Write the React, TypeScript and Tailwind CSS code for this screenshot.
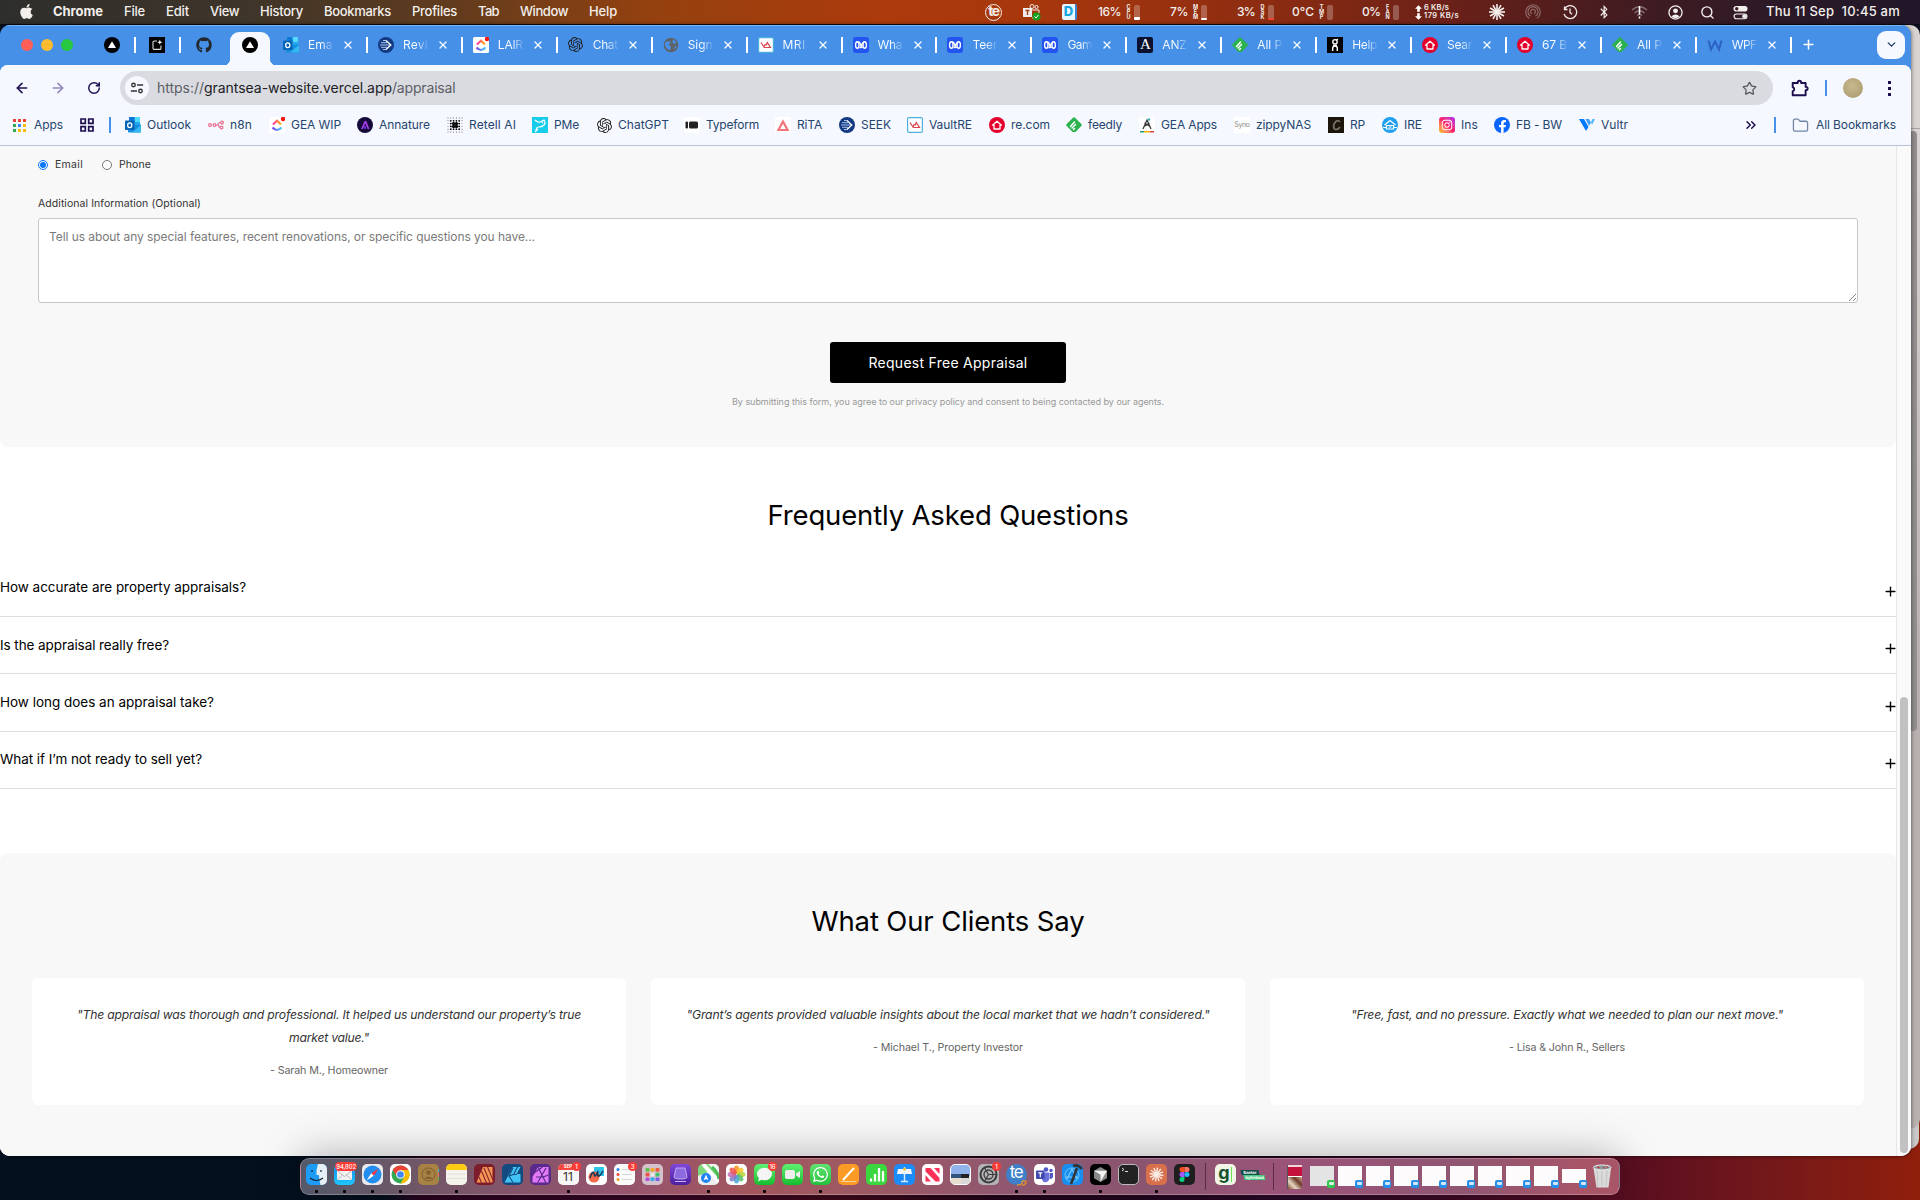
import React, { useLayoutEffect, useRef } from "react";
import { FaApple, FaGithub, FaBluetoothB, FaWhatsapp, FaInstagram, FaFacebookF } from "react-icons/fa";
import { SiOpenai } from "react-icons/si";
import { ArrowLeft, ArrowRight, ChevronDown, ChevronsRight, Folder, Plus, RotateCw, Search, Star, X } from "lucide-react";

/** Single line of text whose tracking is tuned so that it fills a given width. */
function Fit({ w, className = "", children }: { w: number; className?: string; children: string }) {
  const ref = useRef<HTMLSpanElement>(null);
  useLayoutEffect(() => {
    const el = ref.current;
    if (!el) return;
    el.style.letterSpacing = "0px";
    const natural = el.getBoundingClientRect().width;
    el.style.letterSpacing = `${(w - natural) / children.length}px`;
  }, [w, children]);
  return (
    <span ref={ref} className={`inline-block shrink-0 whitespace-pre ${className}`}>
      {children}
    </span>
  );
}

type SvgProps = { children: React.ReactNode; s?: number; vb?: string; className?: string };
const Svg = ({ children, s = 16, vb = "0 0 16 16", className = "" }: SvgProps) => (
  <svg width={s} height={s} viewBox={vb} fill="none" className={`block shrink-0 ${className}`}>
    {children}
  </svg>
);

/* ---------- site icons ---------- */
const VercelIcon = () => (
  <Svg><circle cx="8" cy="8" r="8" fill="#000" /><path d="M8 4.3 12 11H4Z" fill="#fff" /></Svg>
);
const SquareStarIcon = () => (
  <Svg>
    <path d="M0 0h16v16H0z" fill="#000" />
    <path d="M8 4H5.2A1.2 1.2 0 0 0 4 5.2v6A1.2 1.2 0 0 0 5.2 12.400h5.600a1.200 1.200 0 0 0 1.200-1.200V8.500" stroke="#ddd" strokeWidth="1.100" />
    <path d="m10.800 2.600.7 1.900 1.900.7-1.900.7-.7 1.900-.7-1.900-1.900-.7 1.900-.7Z" fill="#fff" />
  </Svg>
);
const OutlookIcon = () => (
  <Svg>
    <path d="M4 0h11v9H4z" fill="#28a8ea" /><path d="M9.500 0H15v5H9.500z" fill="#50d9ff" /><path d="M4 0h5.500v5H4z" fill="#0f78d4" />
    <path d="M3 8 16 7.500V14.500a1 1 0 0 1-1 1H4a1 1 0 0 1-1-1Z" fill="#1490df" /><path d="m16 8-9 7.500h8a1 1 0 0 0 1-1Z" fill="#35b8f1" />
    <rect y="3.500" width="9.500" height="9.500" rx=".8" fill="#0364b8" /><ellipse cx="4.750" cy="8.250" rx="2.100" ry="2.400" stroke="#fff" strokeWidth="1.300" />
  </Svg>
);
const SeekIcon = () => (
  <Svg>
    <circle cx="8" cy="8" r="8" fill="#143a82" />
    <path d="M2 8h10M3 5.700h6M3 10.300h6M5 3.500h3M5 12.500h3" stroke="#a9c2ec" strokeWidth="1" /><path d="m8 3.500 4.800 4.500L8 12.500" stroke="#fff" strokeWidth="1.300" />
  </Svg>
);
const ClickUpIcon = () => (
  <Svg>
    <defs><linearGradient id="cu" x1="0" x2="1"><stop stopColor="#7b3ff2" /><stop offset=".5" stopColor="#5a8cf5" /><stop offset="1" stopColor="#49ccf9" /></linearGradient>
      <linearGradient id="cv" x1="0" x2="1"><stop stopColor="#fd31b5" /><stop offset="1" stopColor="#ffb300" /></linearGradient></defs>
    <rect width="16" height="16" rx="1.500" fill="#fff" />
    <path d="M3.500 10.500q4.500 5 9 0" stroke="url(#cu)" strokeWidth="2.200" /><path d="m4 7.500 4-3.700 4 3.700" stroke="url(#cv)" strokeWidth="2.200" />
    <circle cx="14" cy="2" r="2.200" fill="#f5160a" />
  </Svg>
);
const GptIcon = ({ c = "#222" }: { c?: string }) => <SiOpenai size={15} color={c} className="shrink-0" />;
const GlobeIcon = () => (
  <Svg><circle cx="8" cy="8" r="7.300" fill="#5f6368" /><path d="M2 5.500 6 4l2 1.200-2.500 2L8 9.500l-1 4C3.500 12 2.500 10 2 8ZM10 2l3.500 3.500L11 7 9.500 5ZM12 9l2 .5-3 3.500Z" fill="#4690e8" /></Svg>
);
const VaultIcon = () => (
  <Svg>
    <rect x=".6" y=".6" width="14.800" height="14.800" rx="1.500" fill="#fff" stroke="#4bb0da" strokeWidth="1.200" />
    <path d="m3 5.500 3 4.500L7.300 7M6.500 10.500h6L9.300 5.500 8 8.500" stroke="#d9414a" strokeWidth="1.200" />
  </Svg>
);
const AbcIcon = () => (
  <Svg>
    <rect width="16" height="16" rx="3" fill="#2454f0" />
    <g stroke="#fff" strokeWidth="1.400"><ellipse cx="4.300" cy="8" rx="1.700" ry="3.200" /><ellipse cx="11.700" cy="8" rx="1.700" ry="3.200" /><path d="M5 5.300Q6.500 4.300 7.300 7T9.500 10.900M6.500 10.900Q8 10.500 8.700 8T11 5" /></g>
  </Svg>
);
const AnzIcon = () => (
  <div className="flex size-4 shrink-0 items-center justify-center rounded-[2px] bg-[#0a1230] font-['Liberation_Serif',serif] text-[15px] leading-none text-white">A</div>
);
const FeedlyIcon = () => (
  <Svg>
    <path d="M7 .8a1.500 1.500 0 0 1 2 0l6.300 6.300a1.500 1.500 0 0 1 0 2L9.500 15h-3L.7 9.100a1.500 1.500 0 0 1 0-2Z" fill="#2bb24c" />
    <path d="m4.500 9.500 4-4.500M6 11l3.500-3.500M7.500 12.500l1-1" stroke="#fff" strokeWidth="1.500" strokeLinecap="round" />
  </Svg>
);
const HelpIcon = () => (
  <Svg><path d="M0 0h16v16H0z" fill="#000" /><circle cx="8" cy="4.800" r="2.200" stroke="#fff" strokeWidth="1.400" /><path d="M9.500 3 11 2M5.700 14V11.300a2.300 2.300 0 0 1 4.600 0V14M6 8.500h4" stroke="#fff" strokeWidth="1.400" /></Svg>
);
const ReaIcon = () => (
  <Svg><circle cx="8" cy="8" r="8" fill="#e4002b" /><path d="m3.500 8.200 4.500-4 4.500 4H11V12H5V8.200Z" stroke="#fff" strokeWidth="1.300" strokeLinejoin="round" /></Svg>
);
const WIcon = () => <Svg><path d="m1.500 3.500 2.500 9L8 4.500l4 8 2.500-9" stroke="#2c62c4" strokeWidth="2" /></Svg>;
const N8nIcon = () => (
  <Svg><g stroke="#ea6f8d" strokeWidth="1.200"><circle cx="2" cy="8" r="1.400" /><circle cx="6.500" cy="8" r="1.400" /><circle cx="14" cy="5.500" r="1.400" /><circle cx="13.500" cy="10.500" r="1.400" /><path d="M8 8h1.200q1 0 1.200-1.200.2-1.300 1.300-1.300h1M9.500 8q1 0 1.200 1.200.2 1.300 1.300 1.300" /></g></Svg>
);
const AnnatureIcon = () => (
  <Svg><circle cx="8" cy="8" r="8" fill="#150a3a" /><path d="M4 12 7.500 4h1.800L12.500 12h-2L8.300 6.500 6 12Z" fill="#a43be0" /><path d="M8 9v3" stroke="#5b2bd0" strokeWidth="2" /></Svg>
);
const RetellIcon = () => (
  <Svg>
    {[1, 3.800, 6.600, 9.400, 12.200, 15].map((x, i) => [1, 3.800, 6.600, 9.400, 12.200, 15].map((y, j) => {
      const inner = (i === 2 || i === 3) && (j === 2 || j === 3);
      const mid = i > 0 && i < 5 && j > 0 && j < 5;
      return <circle key={`${i}${j}`} cx={x} cy={y} r={inner ? 1.700 : mid ? 0.900 : 0.450} fill="#000" />;
    }))}
  </Svg>
);
const PMeIcon = () => (
  <Svg><path d="M0 0h16v16H0z" fill="#17cdea" /><path d="M3 3q3 3 5 2t4-2q2 3 0 5t-5 2q-3 0-3 4M3 15l3-3M10 5l1 1" stroke="#fff" strokeWidth="1.200" /></Svg>
);
const TypeformIcon = () => (
  <Svg><rect width="16" height="16" rx="3" fill="#fff" /><rect x="1.500" y="4.500" width="2.500" height="7" rx="1" fill="#222" /><rect x="5" y="4.500" width="9" height="7" rx="1.500" fill="#222" /></Svg>
);
const RitaIcon = () => <Svg><path d="M0 0h16v16H0z" fill="#fff" /><path d="M8 4.500 12.600 13H3.400Z" stroke="#f0767c" strokeWidth="2.200" /></Svg>;
const GeaIcon = () => (
  <Svg><path d="M0 0h16v16H0z" fill="#fff" /><path d="M4 12 8 3l4 9M5.500 6l5 3M10.500 6 6 9" stroke="#333" strokeWidth="1.200" /><path d="M1 14.800h4" stroke="#1aa06d" strokeWidth="1.500" /><path d="M5 14.800h6" stroke="#f4b400" strokeWidth="1.500" /><path d="M11 14.800h4" stroke="#e34133" strokeWidth="1.500" /><circle cx="10" cy="2.500" r="1.200" fill="#3ab" /></Svg>
);
const SynoIcon = () => <div className="flex size-4 shrink-0 items-center justify-center bg-white text-[7px] tracking-tighter text-[#888]">Syno</div>;
const RpIcon = () => (
  <Svg><path d="M0 0h16v16H0z" fill="#1b150c" /><path d="M12 5Q9.500 2 7 5.500T6.500 12q3 1.500 5.500-2" stroke="#75706a" strokeWidth="1.800" /></Svg>
);
const IreIcon = () => (
  <Svg><circle cx="8" cy="8" r="8" fill="#1e9ff0" /><path d="m2.500 8 5.500-4.500L13.500 8M4.500 8.500h7V12h-7ZM1 10.500h3M12 10.500h3M6.500 10h3" stroke="#fff" strokeWidth="1.200" /></Svg>
);
const InstaIcon = () => (
  <div className="flex size-4 shrink-0 items-center justify-center rounded-[3px] bg-linear-to-tr from-[#ffc700] via-[#ff1a6c] to-[#b01bea]"><FaInstagram size={12} color="#fff" /></div>
);
const FbIcon = () => (
  <div className="flex size-4 shrink-0 items-end justify-center overflow-hidden rounded-full bg-[#0866ff]"><FaFacebookF size={13} color="#fff" /></div>
);
const VultrIcon = () => <Svg><path d="M0 2h5l4.500 8L7 14Z" fill="#007bfc" /><path d="M6.500 2H10l2 3.500-2 3.500Z" fill="#3fa0ff" /><path d="m12 5 1.500-3H16l-3 6Z" fill="#51b9ff" /></Svg>;
const AppsIcon = () => (
  <Svg s={13} vb="0 0 13 13">
    {["#ea4335", "#ea4335", "#ea4335", "#34a853", "#4285f4", "#fbbc04", "#34a853", "#fbbc04", "#fbbc04"].map((c, i) => (
      <path key={i} d={`M${(i % 3) * 5} ${Math.floor(i / 3) * 5}h3v3h-3z`} fill={c} />
    ))}
  </Svg>
);
const GroupsIcon = () => (
  <Svg s={14} vb="0 0 14 14"><path d="M1 1h4.300v4.300H1zM8.700 1H13v4.300H8.700zM1 8.700h4.300V13H1zM8.700 8.700H13V13H8.700z" stroke="#1d0f4f" strokeWidth="1.700" /></Svg>
);

/* ---------- menu bar ---------- */
const Stat = ({ v, w, label, ml, fill }: { v: string; w: number; label: string; ml: string; fill: string }) => (
  <div className={`flex items-center ${ml}`}>
    <Fit w={w} className="text-[12px] font-medium">{v}</Fit>
    <div className="ml-[5px] flex w-[5px] flex-col items-center text-[5.500px] leading-[5px] font-bold">
      {label.split("").map((c, i) => <span key={i}>{c}</span>)}
    </div>
    <div className="ml-[3px] flex h-[15px] w-[6px] items-end rounded-[2px] bg-white/25">
      <div className={`w-full rounded-[1px] ${fill}`} />
    </div>
  </div>
);

const menus: [string, number, string][] = [
  ["File", 21, "ml-[21px]"], ["Edit", 23, "ml-[21px]"], ["View", 29, "ml-[21px]"], ["History", 43, "ml-[21px]"],
  ["Bookmarks", 67, "ml-[21px]"], ["Profiles", 45, "ml-[21px]"], ["Tab", 21, "ml-[21px]"], ["Window", 48, "ml-[21px]"], ["Help", 28, "ml-[21px]"],
];

const MenuBar = () => (
  <header className="flex h-6 items-center bg-[linear-gradient(90deg,#2e2e2c_0%,#3f3529_13%,#633c1d_24%,#95410f_34%,#ac3a0c_46%,#a6360d_55%,#8c2c11_66%,#6d2118_75%,#451c20_84%,#2b1928_93%,#211729_100%)] pl-5 text-[#f3efec]">
    <FaApple size={17} className="-mt-px -ml-[2px]" />
    <Fit w={50} className="ml-[18px] text-[13px] font-bold">Chrome</Fit>
    {menus.map(([t, w, m]) => <Fit key={t} w={w} className={`${m} text-[13px] font-medium`}>{t}</Fit>)}
    <div className="mr-5 ml-auto flex items-center">
      <div className="relative flex size-[17px] items-center justify-center rounded-full border-[1.500px] border-[#f3efec] text-[14px] leading-none font-bold tracking-[-1.500px]"><span className="-mt-[3px]">te</span></div>
      <Svg s={18} vb="0 0 18 18" className="ml-[21px]">
        <circle cx="9" cy="3.500" r="2" stroke="#eee" /><circle cx="13.500" cy="4" r="1.600" stroke="#eee" /><path d="M9 7h7v3M9 15h3" stroke="#eee" />
        <rect y="5" width="9" height="9" fill="#eee" /><path d="M2.500 7.500h4M4.500 7.500v4.500" stroke="#a5390e" strokeWidth="1.300" />
        <circle cx="13.500" cy="13.500" r="4" fill="#14a01c" /><path d="m11.500 13.500 1.500 1.500 2.500-3" stroke="#fff" />
      </Svg>
      <div className="ml-[21px] flex h-4 w-[15px] items-center justify-center rounded-[2px] border-r-2 border-[#3a86d6] bg-[#e9f6fd] text-[13px] font-extrabold text-[#19a5e0]">D</div>
      <Stat v="16%" w={23} label="CPU" ml="ml-[21px]" fill="h-[3px] bg-white" />
      <Stat v="7%" w={18} label="MEM" ml="ml-[30px]" fill="h-[2px] bg-white" />
      <Stat v="3%" w={18} label="DSK" ml="ml-[30px]" fill="h-[2px] bg-[#f04030]" />
      <Stat v="0°C" w={22} label="TMP" ml="ml-[18px]" fill="h-0" />
      <Stat v="0%" w={18} label="FAN" ml="ml-[29px]" fill="h-0" />
      <div className="ml-4 flex w-[44px] flex-col text-[7.500px] leading-[8px] font-semibold">
        {[["6 KB/s", 25, "M4 0l4 4H5.500v3.500h-3V4H0Z"], ["179 KB/s", 35, "M4 7.500 0 3.500h2.500V0h3v3.500H8Z"]].map(([t, w, d]) => (
          <div key={t as string} className="flex items-center gap-[2px]">
            <Svg s={7} vb="0 0 8 7.500"><path d={d as string} fill="#fff" /></Svg>
            <Fit w={w as number}>{t as string}</Fit>
          </div>
        ))}
      </div>
      <Svg className="ml-[30px]">
        {[0, 30, 60, 90, 120, 150].map((a) => <path key={a} d="M8 0v16" stroke="#f3efec" strokeWidth="1.600" transform={`rotate(${a} 8 8)`} />)}
      </Svg>
      <Svg className="ml-5 opacity-35"><g stroke="#fff" strokeWidth="1.100"><path d="M4 14.200a7.300 7.300 0 1 1 8 0M5.500 12a5 5 0 1 1 5 0M7 9.800a2.400 2.400 0 1 1 2 0" /></g></Svg>
      <Svg className="ml-[21px]"><path d="M2.500 5A6.500 6.500 0 1 1 2 10M2.500 2.500V5.500H5.500M8 4.500V8.500l2 1.800" stroke="#f3efec" strokeWidth="1.300" /></Svg>
      <div className="ml-[18px] flex w-4 justify-center"><FaBluetoothB size={14} /></div>
      <Svg s={17} vb="0 0 17 17" className="ml-[19px]"><path d="M1 6q7.500-6.500 15 0M3.500 9q5-4.500 10 0M6 11.500q2.500-2 5 0" stroke="#fff" strokeOpacity=".35" strokeWidth="1.600" /><path d="M8.500 2v8.500M8.500 12.500v2" stroke="#fff" strokeWidth="1.600" /></Svg>
      <Svg s={15} className="ml-5"><circle cx="8" cy="8" r="7" stroke="#f3efec" strokeWidth="1.400" /><circle cx="8" cy="6.200" r="2.600" fill="#f3efec" /><path d="M3.500 12.300q4.500-4.500 9 0Q8 16 3.500 12.300" fill="#f3efec" /></Svg>
      <Search size={15} strokeWidth={2.200} className="ml-[17px]" />
      <Svg s={15} className="ml-[18px]"><rect x=".5" y="1" width="15" height="6" rx="3" fill="#f3efec" /><circle cx="4" cy="4" r="1.800" fill="#3a1b25" /><rect x="1.100" y="9.600" width="13.800" height="5" rx="2.500" stroke="#f3efec" strokeWidth="1.200" /><circle cx="12" cy="12" r="2.200" fill="#f3efec" /></Svg>
      <Fit w={134} className="ml-[18px] text-[13px] font-medium">Thu 11 Sep  10:45 am</Fit>
    </div>
  </header>
);

/* ---------- tab strip ---------- */
const tabs: [string, React.ReactNode][] = [
  ["Ema", <OutlookIcon />], ["Revi", <SeekIcon />], ["LAIR", <ClickUpIcon />], ["Chat", <GptIcon />],
  ["Sign", <GlobeIcon />], ["MRI", <VaultIcon />], ["Wha", <AbcIcon />], ["Teer", <AbcIcon />],
  ["Gam", <AbcIcon />], ["ANZ", <AnzIcon />], ["All P", <FeedlyIcon />], ["Help", <HelpIcon />],
  ["Sear", <ReaIcon />], ["67 B", <ReaIcon />], ["All P", <FeedlyIcon />], ["WPF", <WIcon />],
];

const TabStrip = () => (
  <div className="flex h-10 shrink-0 items-center border-t border-[#7db2f2] bg-[#4690e8] pb-[2px] text-white">
    <div className="ml-[21px] flex w-[83px] gap-2">
      <i className="size-3 rounded-full bg-[#ff5f57]" /><i className="size-3 rounded-full bg-[#febc2e]" /><i className="size-3 rounded-full bg-[#28c840]" />
    </div>
    <VercelIcon />
    <i className="ml-[14px] h-4 w-[2px] bg-white" />
    <div className="ml-[13px]"><SquareStarIcon /></div>
    <i className="ml-[14px] h-4 w-[2px] bg-white" />
    <FaGithub size={16} color="#24292f" className="ml-[15px]" />
    <div className="mt-[8px] ml-[10px] flex h-[34px] items-end">
      <i className="size-2 bg-[radial-gradient(circle_at_0_0,transparent_8px,#f5f8fe_8.500px)]" />
      <div className="flex h-[34px] w-10 items-center justify-center rounded-t-[9px] bg-[#f5f8fe] pb-[7px]"><VercelIcon /></div>
      <i className="size-2 bg-[radial-gradient(circle_at_100%_0,transparent_8px,#f5f8fe_8.500px)]" />
    </div>
    <div className="-ml-[5px] flex">
      {tabs.map(([t, icon], i) => (
        <div key={i} className="flex h-4 w-[94.930px] items-center pl-[10px]">
          <div className="flex w-4 shrink-0 justify-center">{icon}</div>
          <div className="ml-[9px] w-[25px] bg-linear-to-r from-white from-55% to-white/10 bg-clip-text text-[12px] whitespace-nowrap text-transparent"><Fit w={t.length === 3 && t !== "MRI" ? 24.500 : t === "MRI" ? 23 : 25}>{t}</Fit></div>
          <X size={12} strokeWidth={2.600} className="ml-[9px] shrink-0" />
          <i className="ml-auto h-4 w-[2px] shrink-0 bg-white" />
        </div>
      ))}
    </div>
    <Plus size={15} strokeWidth={2.400} className="ml-[9px]" />
    <div className="mr-[6px] ml-auto flex size-7 items-center justify-center rounded-[9px] bg-[#f5f8fe]"><ChevronDown size={13} strokeWidth={2.500} color="#1d3b6d" /></div>
  </div>
);

const Toolbar = () => (
  <div className="flex h-[46px] shrink-0 items-center bg-[#f5f8fe] text-[#1d0f4f]">
    <ArrowLeft size={16} strokeWidth={2.300} className="ml-[14px]" />
    <ArrowRight size={16} strokeWidth={2.300} className="ml-5 text-[#8f87b8]" />
    <RotateCw size={14} strokeWidth={2.500} className="ml-[21px]" />
    <div className="ml-[19px] flex h-[34px] w-[1653px] items-center rounded-full bg-[#dadbe0]">
      <div className="ml-[5px] flex size-6 items-center justify-center rounded-full bg-[#f5f8fe]">
        <Svg s={14}><g stroke="#333" strokeWidth="1.600"><circle cx="4" cy="4.500" r="2" /><path d="M8 4.500h7M1 11.500h7" /><circle cx="12" cy="11.500" r="2" /></g></Svg>
      </div>
      <div className="-mt-px ml-2 flex text-[14px] text-[#5c5e66]">
        <Fit w={47}>https://</Fit><Fit w={188} className="text-[#202124]">grantsea-website.vercel.app</Fit><Fit w={63.500}>/appraisal</Fit>
      </div>
      <Star size={15} strokeWidth={2} className="mr-4 ml-auto text-[#55575d]" />
    </div>
    <Svg s={18} className="ml-[18px]"><path d="M1.500 3.500H6V3a1.500 1.500 0 0 1 3 0v.5h4V7h.3a1.500 1.500 0 0 1 0 3H13v4.500H1.500V10.800a1.800 1.800 0 0 0 0-3.500Z" stroke="#1d0f4f" strokeWidth="1.700" strokeLinejoin="round" /></Svg>
    <i className="ml-4 h-4 w-[2px] bg-[#4690e8]" />
    <i className="ml-4 size-5 rounded-full bg-[radial-gradient(circle_at_45%_40%,#c9b98f,#a8976b)]" />
    <div className="ml-[25px] flex flex-col gap-[3px]"><i className="size-[3px] bg-[#1d0f4f]" /><i className="size-[3px] bg-[#1d0f4f]" /><i className="size-[3px] bg-[#1d0f4f]" /></div>
  </div>
);

/* name, icon, text width, distance to the next bookmark */
const bookmarks: [string, React.ReactNode, number, number][] = [
  ["Outlook", <OutlookIcon />, 44, 83], ["n8n", <N8nIcon />, 22, 61], ["GEA WIP", <ClickUpIcon />, 50, 88], ["Annature", <AnnatureIcon />, 51, 90],
  ["Retell AI", <RetellIcon />, 47, 85], ["PMe", <PMeIcon />, 25, 64], ["ChatGPT", <GptIcon />, 51, 88], ["Typeform", <TypeformIcon />, 53, 91],
  ["RiTA", <RitaIcon />, 25, 64], ["SEEK", <SeekIcon />, 30, 68], ["VaultRE", <VaultIcon />, 43, 82], ["re.com", <ReaIcon />, 39, 77],
  ["feedly", <FeedlyIcon />, 34, 73], ["GEA Apps", <GeaIcon />, 56, 95], ["zippyNAS", <SynoIcon />, 55, 94], ["RP", <RpIcon />, 15, 54],
  ["IRE", <IreIcon />, 18, 57], ["Ins", <InstaIcon />, 17, 55], ["FB - BW", <FbIcon />, 46, 85], ["Vultr", <VultrIcon />, 27, 60],
];

const Bookmarks = () => (
  <div className="flex h-[35px] shrink-0 items-center border-b border-[#bcc0d8] bg-[#f5f8fe] pt-[1px] pb-[7px] text-[12px] text-[#26456e]">
    <div className="ml-[13px] flex w-[67px] items-center gap-2"><AppsIcon /><Fit w={29}>Apps</Fit></div>
    <GroupsIcon />
    <i className="mr-[14px] ml-[15px] h-4 w-[2px] bg-[#4690e8]" />
    {bookmarks.map(([t, icon, w, pitch]) => (
      <div key={t} className="flex shrink-0 items-center gap-[6px]" style={{ width: pitch }}>
        <div className="flex w-4 shrink-0 justify-center">{icon}</div><Fit w={w}>{t}</Fit>
      </div>
    ))}
    <ChevronsRight size={16} strokeWidth={2.200} className="ml-auto text-[#1d0f4f]" />
    <i className="ml-[15px] h-4 w-[2px] bg-[#4690e8]" />
    <Folder size={17} strokeWidth={1.800} className="ml-4 text-[#6f86a5]" />
    <Fit w={80} className="mr-[15px] ml-[7px]">All Bookmarks</Fit>
  </div>
);

/* ---------- page ---------- */
const faqs: [string, number][] = [
  ["How accurate are property appraisals?", 246], ["Is the appraisal really free?", 169],
  ["How long does an appraisal take?", 214], ["What if I’m not ready to sell yet?", 202],
];
const quotes: { lines: [string, number][]; by: string; w: number }[] = [
  { lines: [["\"The appraisal was thorough and professional. It helped us understand our property’s true", 504], ["market value.\"", 80]], by: "- Sarah M., Homeowner", w: 118 },
  { lines: [["\"Grant’s agents provided valuable insights about the local market that we hadn’t considered.\"", 523]], by: "- Michael T., Property Investor", w: 150 },
  { lines: [["\"Free, fast, and no pressure. Exactly what we needed to plan our next move.\"", 432]], by: "- Lisa & John R., Sellers", w: 116 },
];

const Page = () => (
  <main className="flex w-[1896px] flex-col bg-white text-black">
    <section className="flex h-[301px] flex-col rounded-b-[8px] bg-[#f8f8f8] px-[38px] pt-3 text-[10.500px] text-[#333]">
      <div className="flex h-[14px] items-center">
        <i className="flex size-[10px] items-center justify-center rounded-full border border-[#0a75ff] bg-white"><i className="size-[6px] rounded-full bg-[#0a75ff]" /></i>
        <Fit w={28} className="-mt-px ml-[7px]">Email</Fit>
        <i className="ml-[19px] size-[10px] rounded-full border border-[#767676] bg-white" />
        <Fit w={32} className="-mt-px ml-[7px]">Phone</Fit>
      </div>
      <div className="mt-6 flex h-4 items-center"><Fit w={163}>Additional Information (Optional)</Fit></div>
      <div className="mt-[6px] flex h-[85px] justify-between rounded-[3px] border border-[#c6c6c6] bg-white pt-[9px] pl-[10px] text-[12px] leading-[18px] text-[#7a7a7a]">
        <Fit w={486}>Tell us about any special features, recent renovations, or specific questions you have...</Fit>
        <Svg s={9} vb="0 0 9 9" className="self-end"><path d="M1 8 8 1M5 8l3-3" stroke="#777" strokeWidth=".9" /></Svg>
      </div>
      <button className="mt-[39px] flex h-[41px] w-[236px] items-center justify-center self-center rounded-[3px] bg-black text-[14px] text-white">
        <Fit w={159}>Request Free Appraisal</Fit>
      </button>
      <div className="mt-[13px] flex h-3 items-center justify-center text-[9px] text-[#999]">
        <Fit w={432}>By submitting this form, you agree to our privacy policy and consent to being contacted by our agents.</Fit>
      </div>
    </section>
    <section className="flex flex-col">
      <h2 className="mt-[51px] flex h-9 items-center justify-center text-[27.500px]"><Fit w={361}>Frequently Asked Questions</Fit></h2>
      <div className="mt-[25.600px] flex flex-col">
        {faqs.map(([q, w]) => (
          <div key={q} className="flex h-[57.400px] items-center justify-between border-b border-[#dedede] text-[13.500px]">
            <Fit w={w} className="-mt-px">{q}</Fit>
            <Plus size={15} strokeWidth={2.200} className="mt-[7px] -mr-[2px]" />
          </div>
        ))}
      </div>
    </section>
    <section className="mt-[63.400px] flex h-[304px] flex-col rounded-t-[8px] bg-[#f8f8f8] px-8 pt-[51px]">
      <h2 className="flex h-9 items-center justify-center text-[27.500px]"><Fit w={273}>What Our Clients Say</Fit></h2>
      <div className="mt-[38px] grid h-[127px] grid-cols-3 gap-[25px]">
        {quotes.map((q) => (
          <article key={q.by} className="flex flex-col items-center rounded-[6px] bg-white pt-[25px]">
            {q.lines.map(([t, w]) => <Fit key={t} w={w} className="text-[12.200px] leading-[23px] text-[#333] italic">{t}</Fit>)}
            <Fit w={q.w} className="mt-[15px] text-[10.700px] leading-[14px] text-[#666]">{q.by}</Fit>
          </article>
        ))}
      </div>
    </section>
  </main>
);

/* ---------- dock ---------- */
const Tile = ({ bg, children, dot, badge }: { bg: string; children?: React.ReactNode; dot?: boolean; badge?: string }) => (
  <div className="relative flex h-full w-7 shrink-0 flex-col items-center pt-[5px]">
    <div className={`flex size-[21px] items-center justify-center overflow-hidden rounded-[5px] ${bg}`}>{children}</div>
    {dot && <i className="mt-[5px] size-[3px] rounded-[1px] bg-black" />}
    {badge && <b className="absolute top-[3px] right-px flex h-[9px] min-w-[9px] items-center justify-center rounded-full bg-[#fb3b35] px-[1px] text-[6px] font-medium tracking-tight text-white">{badge}</b>}
  </div>
);
const D = ({ children }: { children: React.ReactNode }) => <Svg s={21} vb="0 0 21 21">{children}</Svg>;
const petals = ["#f7941d", "#fbc52d", "#b5d334", "#5bbf6a", "#4aa7d8", "#7c7cc8", "#c36bb0", "#ef5350"];

const Dock = () => (
  <nav className="absolute top-[1158px] left-[300px] flex h-[37px] w-[1320px] items-center rounded-[9px] border border-white/25 bg-[linear-gradient(90deg,#54596a,#6d5766_8%,#85546a_16%,#95546e_24%,#a3565e_34%,#9d5962_42%,#8f5771_55%,#8a5570_65%,#9c5379_75%,#8f5672_88%,#a85568_97%)] pl-px shadow-[0_0_42px_rgba(0,0,0,0.34)]">
    <Tile dot bg="bg-[#1e9bf5]"><D><path d="M12 0q-2 6-1.500 11h2.500q0 5 1.500 10H21V0Z" fill="#e6eef6" /><path d="M6 6v2M15 6v2M4 14q6.500 5 13 0" stroke="#123" strokeWidth="1.200" /></D></Tile>
    <Tile dot badge="94,802" bg="bg-linear-to-b from-[#1d87f3] to-[#1fc7f8]"><D><rect x="3" y="6" width="15" height="10" rx="1.500" fill="#f2f2f2" /><path d="m3.500 7 7 5.500 7-5.500M3.500 15.500l5-4.500M17.500 15.500l-5-4.500" stroke="#aaa" strokeWidth=".8" /></D></Tile>
    <Tile dot bg="bg-[#e9e9ec]"><D><circle cx="10.500" cy="10.500" r="9" fill="#218df0" /><path d="m16.500 4.500-4.800 7.200-2.400-2.400Z" fill="#f33" /><path d="m4.500 16.500 4.800-7.200 2.400 2.400Z" fill="#fff" /></D></Tile>
    <Tile dot bg="bg-white"><D><circle cx="10.500" cy="10.500" r="9" fill="#34a853" /><path d="M2.700 6A9 9 0 0 1 18.300 6H10.500L7 12.500Z" fill="#ea4335" /><path d="M10.500 19.500A9 9 0 0 0 18.300 6h-7.800l4 6.500Z" fill="#fbbc04" /><circle cx="10.500" cy="10.500" r="4.300" fill="#fff" /><circle cx="10.500" cy="10.500" r="3.300" fill="#4285f4" /></D></Tile>
    <Tile bg="bg-[#a88144]"><D><circle cx="10.500" cy="10.500" r="6.500" stroke="#80602f" /><circle cx="10.500" cy="8.500" r="2.300" fill="#80602f" /><path d="M6 15q4.500-5 9 0" fill="#80602f" /><path d="M20.500 5v3" stroke="#4bd" /><path d="M20.500 9v3" stroke="#e66" /><path d="M20.500 13v3" stroke="#5b5" /></D></Tile>
    <Tile dot bg="bg-[#f5f3ee]"><D><path d="M0 0h21v6H0z" fill="#fecb13" /><path d="M1 10h19M1 14.500h19" stroke="#ddd9d0" strokeWidth=".7" /></D></Tile>
    <Tile bg="bg-[#7e1c2c]"><D><path d="M2.500 18.500 9 3h9.500v15.500Z" fill="#f79355" /><path d="m7.500 7 5 12M10 4l6 14.500M13.500 3 19 16M5 13l2.500 5.500" stroke="#7e2c2c" strokeWidth="1.100" /></D></Tile>
    <Tile bg="bg-[#134a80]"><D><path d="M2.500 18.500 11 3h7.500l-4 7h4v8.500Z" fill="#41c4f5" /><path d="m7 12 4.500-1.500H15M11 4l-4 8 4 6.500M11.500 10.500 15.500 3" stroke="#134a80" strokeWidth="1.100" /></D></Tile>
    <Tile bg="bg-[#592a8c]"><D><path d="M2.500 18.500V13L8 3h10.500v15.500Z" fill="#e27af7" /><path d="m2.500 10 10-7M8 3l5 10 5.500-2M6 13h7l3 6M8 18l8-14" stroke="#592a8c" strokeWidth="1.200" /></D></Tile>
    <Tile dot badge="1" bg="bg-[#f7f7f7]"><div className="flex size-full flex-col items-center"><div className="h-[6px] w-full bg-[#f5463b] text-center text-[4.500px] leading-[6px] font-bold text-white">SEP</div><span className="text-[12px] leading-[14px] text-[#333]">11</span></div></Tile>
    <Tile bg="bg-white"><D><path d="M8 3h10v9H8z" fill="#30c3ea" /><circle cx="8" cy="13" r="5.500" fill="#f2694a" /><path d="M4 14q3-9 4-4t4-3q-1 6 1 5t4-5" stroke="#123a5a" strokeWidth="1.500" /></D></Tile>
    <Tile badge="3" bg="bg-[#fafafa]"><D><circle cx="4" cy="5.500" r="1.500" fill="#2b82f0" /><circle cx="4" cy="10.500" r="1.500" fill="#f34b3c" /><circle cx="4" cy="15.500" r="1.500" fill="#f59b24" /><path d="M8 5.500h10M8 10.500h10M8 15.500h10" stroke="#ccc" strokeWidth=".8" /></D></Tile>
    <Tile bg="bg-[#d3c1cb]"><D>{["#5ec14b", "#f0a92d", "#e95c3d", "#ef5350", "#e7e7e7", "#3fc26b", "#b34cd9", "#31a7ee", "#7a5bea"].map((c, i) => <rect key={i} x={3.500 + (i % 3) * 5} y={4 + Math.floor(i / 3) * 4.700} width="4" height="3.700" rx="1" fill={c} />)}</D></Tile>
    <Tile bg="bg-linear-to-b from-[#8146dc] to-[#4a1f9d]"><D><path d="M6 4h9l2 9q0 2-6.500 2T4 13Z" fill="#8e6ae0" stroke="#c7b4f5" strokeWidth=".9" /><path d="M5 17.500h11" stroke="#c7b4f5" strokeWidth="1" /></D></Tile>
    <Tile dot bg="bg-[#7dd87a]"><D><path d="M10 0h11v10Z" fill="#f4f4f4" /><path d="M0 12 10 8l11 4v9H0Z" fill="#eee" /><path d="m5 0 16 18" stroke="#fff" strokeWidth="4" /><path d="M14 3q6 5 7 12" stroke="#4bbd55" strokeWidth="3" /><circle cx="8" cy="14" r="5" fill="#1e82f5" /><path d="m8 10.500 2.500 6L8 15l-2.500 1.500Z" fill="#fff" /></D></Tile>
    <Tile bg="bg-white"><D>{petals.map((c, i) => <ellipse key={c} cx="10.500" cy="5.800" rx="2.700" ry="4.200" fill={c} fillOpacity=".85" transform={`rotate(${i * 45} 10.500 10.500)`} />)}</D></Tile>
    <Tile dot badge="16" bg="bg-linear-to-b from-[#5df170] to-[#0fbc2d]"><D><ellipse cx="10.500" cy="10" rx="7.500" ry="6.300" fill="#f5f5f5" /><path d="m5 14-1 3.500 4-2Z" fill="#f5f5f5" /></D></Tile>
    <Tile bg="bg-linear-to-b from-[#5df170] to-[#0fbc2d]"><D><rect x="3" y="6" width="10" height="9" rx="2" fill="#eee" /><path d="m14 9.500 4-2.500v7l-4-2.500Z" fill="#eee" /></D></Tile>
    <Tile dot bg="bg-linear-to-b from-[#5fe36e] to-[#1fc13d]"><FaWhatsapp size={17} color="#fff" /></Tile>
    <Tile bg="bg-[#fb9a25]"><D><path d="M3 17.500h15" stroke="#ffe0b5" strokeWidth=".8" /><path d="M5 16 16 4" stroke="#fff" strokeWidth="2" /></D></Tile>
    <Tile bg="bg-[#3ad83e]"><D><path d="M5 17.500v-3M9 17.500V10M13 17.500V4M17 17.500V7" stroke="#fff" strokeWidth="2.300" /></D></Tile>
    <Tile bg="bg-[#1c8df8]"><D><path d="M4 5h13l1 5H3Z" fill="#f5f5f5" /><path d="M10.500 3v14M7 17.500h7" stroke="#d9ecff" strokeWidth="1.400" /><circle cx="10.500" cy="5" r="1.500" fill="#fbc52d" /></D></Tile>
    <Tile bg="bg-white"><D><path d="M3.500 4h5l9 10v3.500h-4L3.500 7.500Z" fill="#fb3158" /><path d="M12 4h5.500v6ZM3.500 11v6.500H9Z" fill="#fb3158" /></D></Tile>
    <Tile bg="border border-white bg-[#8fb3ea]"><D><path d="M0 12h21v9H0z" fill="#e7ddcf" /><path d="M0 10h12v4H0z" fill="#31557f" /><path d="M12 11h6l2 9h-9Z" fill="#d8d8d8" /><path d="M11 10h8v4h-8z" fill="#222" /></D></Tile>
    <Tile badge="1" bg="bg-[#b3b3b5]"><D><circle cx="10.500" cy="10.500" r="8" stroke="#3a3a3c" strokeWidth="2" /><circle cx="10.500" cy="10.500" r="4.500" stroke="#3a3a3c" strokeWidth="1.300" /><path d="M10.500 10.500 6 3M10.500 10.500H19M10.500 10.500 6 18" stroke="#3a3a3c" strokeWidth="1.200" /></D></Tile>
    <div className="relative h-full"><Tile dot bg="rounded-full! bg-[#3e7fc8]"><span className="-mt-1 text-[17px] leading-none tracking-[-1.500px] text-white">te</span></Tile><Svg s={12} vb="0 0 12 6" className="absolute top-[18px] right-[2px]"><path d="M1 5q5 0 5-2.500T9 1q2 .5.500 2.500T6 5" stroke="#e8932b" strokeWidth="1.300" /></Svg></div>
    <Tile dot bg="bg-white"><D><circle cx="12" cy="5.500" r="2.300" fill="#5059c9" /><circle cx="17" cy="6.500" r="1.700" fill="#5059c9" /><path d="M8 8.500h7v5a3.500 3.500 0 0 1-7 2Z" fill="#6a72d8" /><path d="M15.500 9h3.500v4q-1 2.500-3.500 2Z" fill="#5059c9" /><rect x="2" y="6.500" width="8.500" height="8.500" rx="1" fill="#4048b0" /><path d="M4.300 8.800h4M6.300 8.800v4.500" stroke="#fff" strokeWidth="1.200" /></D></Tile>
    <Tile bg="bg-[#178ff0]"><D><circle cx="10" cy="11" r="7" stroke="#6fc4fa" /><path d="m5 15 5-10 5 10M4 13h12" stroke="#7bcbfc" strokeWidth="1.200" /><path d="M15 4 9 20" stroke="#333" strokeWidth="2.600" /><path d="M11 2q5-2 9 3" stroke="#333" strokeWidth="2.600" /></D></Tile>
    <Tile dot bg="bg-black"><D><path d="m10.500 3 6.500 3.800v7.500L10.500 18 4 14.300V6.800Z" fill="#888" /><path d="M4 6.800h13L10.500 18v-7.300Z" fill="#f1f1f1" /></D></Tile>
    <Tile bg="border border-[#bbb] bg-[#222]"><D><path d="m4 4 2 1.500L4 7M7 7.500h3" stroke="#ddd" strokeWidth="1" /></D></Tile>
    <Tile dot bg="bg-[#d9704c]"><D>{[0, 30, 60, 90, 120, 150].map((a) => <path key={a} d="M10.500 3.500v14" stroke="#fbeee6" strokeWidth="1.400" transform={`rotate(${a + 8} 10.500 10.500)`} />)}</D></Tile>
    <Tile bg="bg-[#1e1e1e]"><D><path d="M10.500 3H8a2.500 2.500 0 0 0 0 5h2.500Z" fill="#f24e1e" /><path d="M10.500 3H13a2.500 2.500 0 0 1 0 5h-2.500Z" fill="#ff7262" /><path d="M10.500 8H8a2.500 2.500 0 0 0 0 5h2.500Z" fill="#a259ff" /><circle cx="13" cy="10.500" r="2.500" fill="#1abcfe" /><path d="M10.500 13H8a2.500 2.500 0 1 0 2.500 2.500Z" fill="#0acf83" /></D></Tile>
    <i className="ml-[7px] h-[27px] w-px bg-[#5a2b46]" />
    <div className="ml-[5px] h-full"><Tile bg="bg-[#f1f5e8]"><span className="-mt-1 text-[18px] leading-none font-bold text-[#14532d]">g</span><i className="ml-px h-[15px] w-px bg-[#6fe04d]" /></Tile></div>
    <div className="-mt-1 ml-[2px] flex w-[25px] flex-col text-[4px] leading-[5px] font-bold text-white">
      <span className="w-[18px] skew-x-12 bg-[#12504c] text-center">Banter</span><span className="ml-[3px] w-[21px] skew-x-12 bg-[#4bc982] text-center">byEmbed</span>
    </div>
    <i className="ml-[7px] h-[27px] w-px bg-[#5a2b46]" />
    <div className="ml-[13px] flex h-6 w-[15px] flex-col border-l border-[#555] bg-[#c5123c]"><i className="h-[2px] bg-[#f2d5d9]" /><i className="mt-[9px] h-px bg-white" /><i className="flex-1 bg-[linear-gradient(45deg,#7a4a2c,#e8d8c4,#6a3826,#d2b090)]" /></div>
    <div className="ml-[8px] flex">
      {Array.from({ length: 10 }, (_, i) => (
        <div key={i} className="relative flex h-[22px] w-7 items-start">
          <div className={i === 9 ? "mt-[3px] h-[14px] w-6 bg-[#fdfbfb]" : i === 0 ? "h-5 w-6 bg-[#e4e4e4]" : "h-5 w-6 bg-[#fdfbfb]"} />
          <i className={`absolute right-[3px] bottom-0 flex size-[8px] items-center justify-center rounded-[2px] ${i === 0 ? "bg-[#33c653]" : "bg-[#258fe9]"}`}><i className="h-[3px] w-[5px] rounded-[1px] bg-white/80" /></i>
        </div>
      ))}
    </div>
    <Svg s={24} vb="0 0 24 24" className="-mt-[2px]"><path d="M3.500 4h17.500l-2.500 19.500h-12Z" fill="#dadada" /><path d="m7 6 1 16M12 6v16M17 6l-1 16" stroke="#c6c6c6" strokeWidth="1.200" /><ellipse cx="12.200" cy="3.500" rx="8.800" ry="2.500" fill="#8d9699" stroke="#eee" /><path d="m7 3 3 1M13 3l2 1.500M16 2.500l2 1" stroke="#c33" /></Svg>
  </nav>
);

export default function App() {
  return (
    <div className="relative flex h-[1200px] w-[1920px] flex-col overflow-hidden bg-[linear-gradient(90deg,#03101e_0%,#04101e_20%,#2c0421_22%,#380625_36%,#400a1a_44%,#22041a_52%,#2a0a28_68%,#450a25_78%,#5d1020_86%,#771919_93%,#901f0c_100%)] font-['Inter','Liberation_Sans',sans-serif]">
      <MenuBar />
      {/* windows stacked behind the browser, visible at the right edge */}
      <div className="absolute top-6 right-0 h-20 w-20 bg-[#0c1120]" />
      <div className="absolute top-[600px] right-px h-[549px] w-20 rounded-[10px] bg-[#c9c9c9]" />
      <div className="absolute top-[25px] right-0 flex h-[1104px] w-20 flex-col items-end rounded-[10px] bg-linear-to-b from-[#d9d4d1] from-10% to-[#b9b1af] to-60% pt-[103px]">
        <i className="h-px w-full bg-[#aaa5a3]" />
        <i className="mt-[2px] mr-[3px] h-[600px] w-3 rounded-[4px] bg-[#938f8f]" />
      </div>
      <div className="absolute inset-x-0 top-6 h-px bg-[#0b0d14]" />
      <div className="relative mt-px flex h-[1131px] w-[1911px] flex-col overflow-hidden rounded-[10px] bg-[#4690e8] shadow-[0_0_4px_rgba(0,0,0,0.6)]">
        <TabStrip />
        <div className="flex flex-1 flex-col overflow-hidden rounded-t-[8px] bg-[#f5f8fe]">
          <Toolbar />
          <Bookmarks />
          <div className="flex flex-1">
            <Page />
            <div className="w-[15px] border-l border-[#e6e6e6] bg-[#fafafa] pt-[551px] pl-[3px]"><div className="h-[456px] w-2 rounded-full bg-[#c1c1c1]" /></div>
          </div>
        </div>
      </div>
      <Dock />
    </div>
  );
}
